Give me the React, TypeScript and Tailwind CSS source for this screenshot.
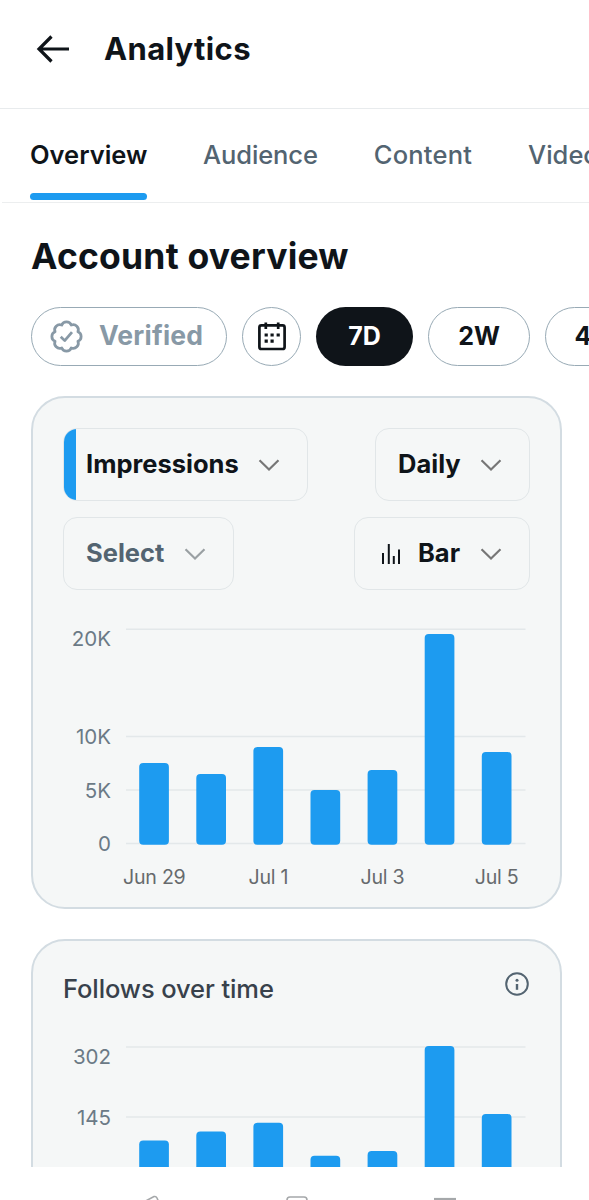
import type { ReactNode } from 'react'

type ChartProps = {
    top: number
    height: number
    lines: { y: number; label: string; labelY: number }[]
    tops: number[]
    bottom: number
    days?: string[]
}

function Chevron({ className }: { className: string }) {
    return (
        <svg viewBox="0 0 22 14" className={`w-[22px] h-[14px] ${className}`} fill="none" stroke="currentColor" strokeWidth="2.2">
            <path d="M1.5 2.2 L11 11.5 L20.5 2.2" />
        </svg>
    )
}

function Chart({ top, height, lines, tops, bottom, days = [] }: ChartProps) {
    return (
        <svg viewBox={`33 ${top} 527 ${height}`} width="527" height={height} className="block">
            {lines.map((line) => (
                <g key={line.label}>
                    <path d={`M126 ${line.y} H525.5`} stroke="#e3e8ea" strokeWidth="1.5" />
                    <text x="111" y={line.labelY} textAnchor="end" fontSize="20.5" fill="#6b7a86">
                        {line.label}
                    </text>
                </g>
            ))}
            {tops.map((y, i) => (
                <rect key={i} x={139.2 + i * 57.1} y={y} width="29.7" height={bottom - y} rx="4" fill="#1d9bf0" />
            ))}
            {days.map((day, i) => (
                <text key={day} x={154.3 + i * 114.1} y="884" textAnchor="middle" fontSize="19.6" letterSpacing="-0.25" fill="#666a6d">
                    {day}
                </text>
            ))}
        </svg>
    )
}

function Select({ className, children }: { className: string; children: ReactNode }) {
    return (
        <button className={`h-[73px] flex flex-row items-center rounded-[14px] border-[1.5px] border-[#e1e6e8] text-[25.5px] font-bold overflow-hidden ${className}`}>
            {children}
        </button>
    )
}

export default function App() {
    return (
        <div className="w-full h-[1200px] overflow-hidden bg-white text-[#0f1419] font-['Inter',sans-serif] whitespace-nowrap flex flex-col">
            <header className="h-[109px] shrink-0 border-b border-[#e8ebed] flex flex-row items-start pl-9 pt-[30px]">
                <svg viewBox="0 0 34 30" className="w-[34px] h-[30px] mt-1" fill="none" stroke="currentColor" strokeWidth="3.2">
                    <path d="M33 15 H3.5 M15.5 2.5 L3 15 L15.5 27.5" />
                </svg>
                <h1 className="ml-[34px] text-[31px] leading-[38px] font-bold tracking-[0.35px]">Analytics</h1>
            </header>

            <nav className="h-[94px] shrink-0 ml-0.5 pl-7 border-b border-[#eceeef] flex flex-row gap-14 text-[25.5px] leading-[36px] font-medium text-[#536471]">
                <div className="w-[117px] flex flex-col pt-[28px] text-[#0f1419] font-semibold">
                    <span>Overview</span>
                    <span className="mt-[20px] h-[7px] shrink-0 rounded-full bg-[#1d9bf0]" />
                </div>
                <span className="w-[115px] pt-[28px] tracking-[-0.1px]">Audience</span>
                <span className="w-[99px] pt-[28px] tracking-[0.2px]">Content</span>
                <span className="pt-[28px]">Videos</span>
            </nav>

            <main className="h-[964px] shrink-0 overflow-hidden pl-[31px]">
                <h2 className="mt-[31px] text-[35.5px] leading-[46px] font-bold tracking-[0.2px]">Account overview</h2>

                <div className="mt-[27px] flex flex-row gap-[15px] text-[25px] font-bold">
                    <button className="w-[196px] h-[59px] shrink-0 rounded-full border-[1.5px] border-[#98aab5] flex flex-row items-center pl-[18px] text-[#8899a6]">
                        <svg viewBox="0 0 24 24" className="w-[33px] h-[33px]" fill="none" stroke="currentColor" strokeWidth="2" strokeLinejoin="round">
                            <path d="M8.56 3.7 A3.7 3.7 0 0 1 15.44 3.7 A3.7 3.7 0 0 1 20.3 8.56 A3.7 3.7 0 0 1 20.3 15.44 A3.7 3.7 0 0 1 15.44 20.3 A3.7 3.7 0 0 1 8.56 20.3 A3.7 3.7 0 0 1 3.7 15.44 A3.7 3.7 0 0 1 3.7 8.56 A3.7 3.7 0 0 1 8.56 3.7 Z" />
                            <path d="M7.8 12.2 L10.7 15 L16 8.8" />
                        </svg>
                        <span className="ml-4 -mt-0.5 text-[26.5px] tracking-[0.2px]">Verified</span>
                    </button>
                    <button className="w-[59px] h-[59px] shrink-0 rounded-full border-[1.5px] border-[#98aab5] flex justify-center items-center">
                        <svg viewBox="0 0 28 29" className="w-[28px] h-[29px]" fill="none" stroke="currentColor">
                            <rect x="1.4" y="3.4" width="25.2" height="23.6" rx="2" strokeWidth="2.7" />
                            <path d="M7.8 0.5 V7 M20.2 0.5 V7" strokeWidth="2.7" />
                            <path d="M6.6 13 H9.8 M12.5 13 H15.7 M18.6 13 H21.8 M6.6 19.2 H9.8 M12.5 19.2 H15.7" strokeWidth="3.2" />
                        </svg>
                    </button>
                    <button className="w-[97px] h-[59px] shrink-0 rounded-full bg-[#0f1419] text-white">7D</button>
                    <button className="w-[102px] h-[59px] shrink-0 rounded-full border-[1.5px] border-[#98aab5]">2W</button>
                    <button className="w-[102px] h-[59px] shrink-0 rounded-full border-[1.5px] border-[#98aab5]">4W</button>
                </div>

                <section className="mt-[30px] w-[531px] h-[513px] rounded-[34px] border-2 border-[#d3dce2] bg-[#f5f7f7] pt-[30px]">
                    <div className="flex flex-row justify-between px-[30px]">
                        <Select className="w-[245px]">
                            <span className="w-3 h-full shrink-0 bg-[#1d9bf0]" />
                            <span className="ml-[10px]">Impressions</span>
                            <Chevron className="ml-auto mr-[27px] text-[#777]" />
                        </Select>
                        <Select className="w-[155px] pl-[22px]">
                            <span>Daily</span>
                            <Chevron className="ml-auto mr-[27px] text-[#777]" />
                        </Select>
                    </div>
                    <div className="mt-4 flex flex-row justify-between px-[30px]">
                        <Select className="w-[171px] pl-[22px] text-[#536471]">
                            <span>Select</span>
                            <Chevron className="ml-auto mr-[27px] text-[#9aa0a3]" />
                        </Select>
                        <Select className="w-[176px] pl-[26px]">
                            <svg viewBox="0 0 20 22" className="w-[20px] h-[22px]" stroke="currentColor" strokeWidth="2">
                                <path d="M2 10 V21 M7.8 1 V21 M12.8 13 V21 M18 6.5 V21" />
                            </svg>
                            <span className="ml-[17px]">Bar</span>
                            <Chevron className="ml-auto mr-[27px] text-[#777]" />
                        </Select>
                    </div>
                    <Chart
                        top={590}
                        height={317}
                        lines={[
                            { y: 629.3, label: '20K', labelY: 646 },
                            { y: 736.5, label: '10K', labelY: 744 },
                            { y: 790, label: '5K', labelY: 797.5 },
                            { y: 843.5, label: '0', labelY: 851 },
                        ]}
                        tops={[763, 774, 747, 790, 770, 634, 752]}
                        bottom={844.8}
                        days={['Jun 29', 'Jul 1', 'Jul 3', 'Jul 5']}
                    />
                </section>

                <section className="mt-[30px] w-[531px] h-[513px] rounded-[34px] border-2 border-[#d3dce2] bg-[#f5f7f7]">
                    <div className="h-[79px] flex flex-row justify-between items-start px-[30px] pt-[30px]">
                        <h3 className="text-[25.5px] leading-[36px] font-medium tracking-[-0.1px] text-[#38414b]">Follows over time</h3>
                        <svg viewBox="0 0 26 26" className="w-[26px] h-[26px]" fill="none" stroke="#536471" strokeWidth="2">
                            <circle cx="13" cy="13" r="10.8" />
                            <path d="M13 13 V18.8" strokeWidth="2.4" />
                            <circle cx="13" cy="9.3" r="1.5" fill="#536471" stroke="none" />
                        </svg>
                    </div>
                    <Chart
                        top={1020}
                        height={300}
                        lines={[
                            { y: 1047, label: '302', labelY: 1063.5 },
                            { y: 1117, label: '145', labelY: 1124.5 },
                        ]}
                        tops={[1140.5, 1131.5, 1122.8, 1155.7, 1151, 1046, 1114]}
                        bottom={1260}
                    />
                </section>
            </main>

            <footer className="h-[33px] shrink-0 bg-white overflow-hidden">
                <svg viewBox="0 1167 589 33" width="589" height="33" fill="none" stroke="#a5a8aa" strokeWidth="1.6">
                    <path d="M138 1205 L154 1196.6 Q156 1196 157 1198 L160 1205" />
                    <rect x="287" y="1197" width="20" height="20" rx="3" />
                    <path d="M434 1199 H456" strokeWidth="2.2" />
                </svg>
            </footer>
        </div>
    )
}
